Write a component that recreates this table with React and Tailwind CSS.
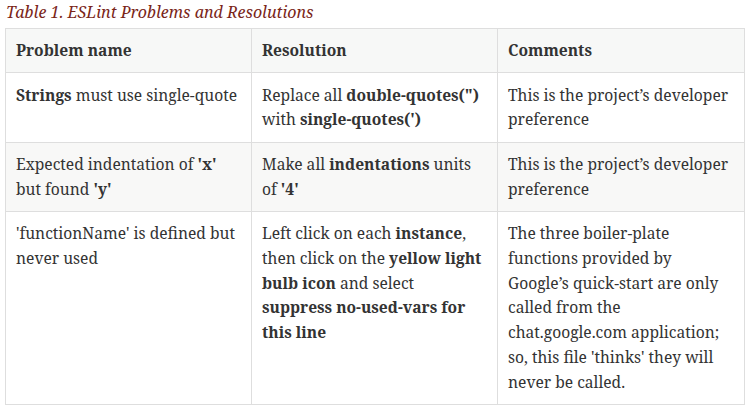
export default function App() {
  const cell = "border border-[#dedede] px-[10px] py-[9.3px] align-top text-left";
  return (
    <div
      className="bg-white w-[751px] h-[413px] pl-[5px] text-[#333333]"
      style={{ fontFamily: '"Noto Serif", "DejaVu Serif", serif' }}
    >
      <div className="italic text-[16px] leading-[24px] text-[#7a2518] pl-[1px] mb-[4px]">
        Table 1. ESLint Problems and Resolutions
      </div>
      <table className="table-fixed border-collapse w-[739px] text-[15.6px] leading-[24.8px]">
        <colgroup>
          <col className="w-[246px]" />
          <col className="w-[246px]" />
          <col className="w-[247px]" />
        </colgroup>
        <thead>
          <tr className="bg-[#f7f8f7]">
            <th className={cell + " font-bold"}>Problem name</th>
            <th className={cell + " font-bold"}>Resolution</th>
            <th className={cell + " font-bold"}>Comments</th>
          </tr>
        </thead>
        <tbody>
          <tr>
            <td className={cell}>
              <strong>Strings</strong> must use single-quote
            </td>
            <td className={cell}>
              Replace all <strong>double-quotes(")</strong> with <strong>single-quotes(')</strong>
            </td>
            <td className={cell}>This is the project’s developer preference</td>
          </tr>
          <tr className="bg-[#f8f8f7]">
            <td className={cell}>
              Expected indentation of <strong>'x'</strong> but found <strong>'y'</strong>
            </td>
            <td className={cell}>
              Make all <strong>indentations</strong> units of <strong>'4'</strong>
            </td>
            <td className={cell}>This is the project’s developer preference</td>
          </tr>
          <tr>
            <td className={cell}>'functionName' is defined but never used</td>
            <td className={cell}>
              Left click on each <strong>instance</strong>, then click on the{" "}
              <strong>yellow light bulb icon</strong> and select{" "}
              <strong>suppress no-used-vars for this line</strong>
            </td>
            <td className={cell}>
              The three boiler-plate functions provided by Google’s quick-start are only called from
              the chat.google.com application; so, this file 'thinks' they will never be called.
            </td>
          </tr>
        </tbody>
      </table>
    </div>
  );
}
